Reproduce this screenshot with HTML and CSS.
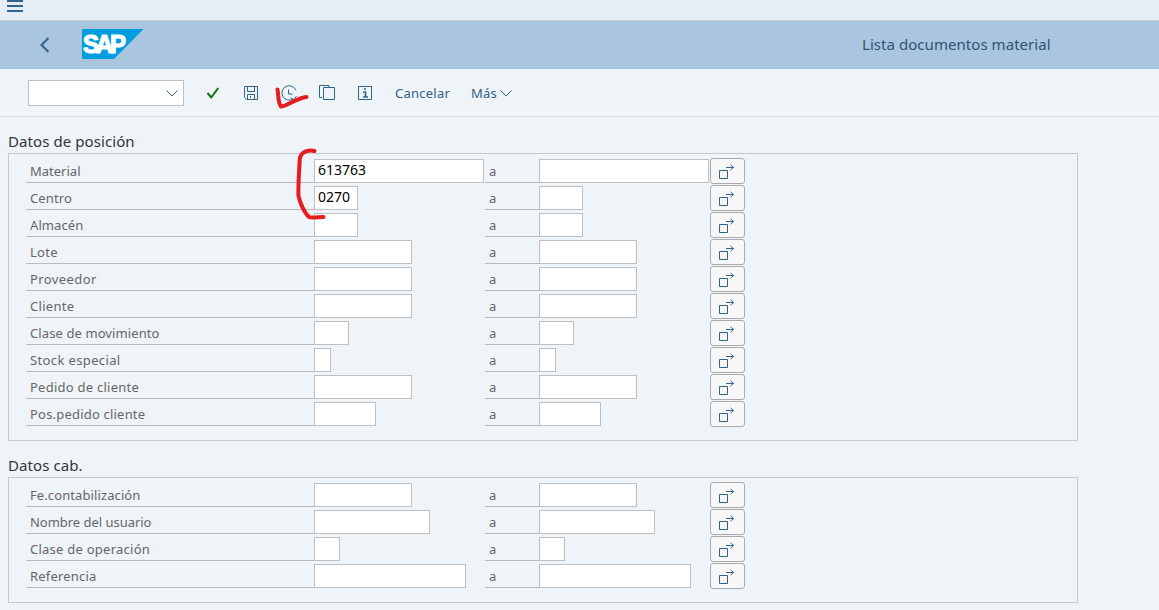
FILE: index.html
```html
<!DOCTYPE html>
<html lang="es">
<head>
<meta charset="utf-8">
<title>Lista documentos material</title>
<link rel="stylesheet" href="styles.css">
</head>
<body>
<svg class="defs" width="0" height="0" aria-hidden="true">
  <symbol id="multi" viewBox="0 0 16 16"><path d="M.5 6.500h8v8h-8zM7 3.500h7.500M11.500 .8l3 2.700-3 2.700"/></symbol>
</svg>
<div class="menubar">
  <svg class="burger" width="16" height="13" viewBox="0 0 16 13"><path d="M0 1h16M0 6h16M0 11h16"/></svg>
</div>
<header class="header">
  <svg class="back" width="10" height="16" viewBox="0 0 10 16"><path d="M8.500 1L1.500 8l7 7"/></svg>
  <svg class="logo" width="62" height="30" viewBox="0 0 62 30"><path class="logo-bg" d="M0 0h61.500L32 30H0z"/><text transform="translate(.9 23.600) scale(.960 1)">SAP</text></svg>
  <h1 class="title">Lista documentos material</h1>
</header>
<nav class="toolbar">
  <div class="combo"><svg width="12" height="7" viewBox="0 0 12 7"><path d="M.5.5L6 6 11.500.5"/></svg></div>
  <svg class="tool check" width="14" height="14" viewBox="0 0 14 14"><path d="M1.500 7l3.700 4.500L12.300 2"/></svg>
  <svg class="tool save" width="16" height="16" viewBox="0 0 16 16"><path d="M1.500 1.500h13v13h-11l-2-2zM4.500 1.500v5h7v-5M4.500 14.500v-5h7v5M7.500 11v2"/></svg>
  <svg class="tool" width="16" height="16" viewBox="0 0 16 16"><path d="M14.800 5.200A7.200 7.200 0 1 0 12 14M7.500 4.500v4.500h4M9.500 12.500l3 2.500 3-4"/></svg>
  <svg class="tool" width="16" height="16" viewBox="0 0 16 16"><path d="M3 12.500H.5V.5h9.500v2M4.500 14.500v-12h11v12z"/></svg>
  <svg class="tool" width="16" height="16" viewBox="0 0 16 16"><path d="M1.500 1.500h13v13h-13z"/><path class="info" d="M7 4h2M6 7h2.500v5M6 12h5"/></svg>
  <span class="action cancel">Cancelar</span>
  <span class="action more">Más</span>
  <svg class="chev" width="12" height="7" viewBox="0 0 12 7"><path d="M.5.5L6 6 11.500.5"/></svg>
</nav>
<main class="content" id="content"></main>
<svg class="ink" width="1159" height="610" viewBox="0 0 1159 610"><path d="M277.500 89.500C278.500 95 278 103 281 106.500C285 107 297 98 306.500 97"/><path d="M314.500 151C310 149.500 301 151 299.800 159C299 172 298 188 298.500 196C300 203 304.500 213 309 217C312 218.200 318 217 323.500 217"/></svg>
<script src="app.js"></script>
</body>
</html>
```
FILE: styles.css
```css
* { box-sizing: border-box; }
body {
  margin: 0;
  height: 610px;
  overflow: hidden;
  position: relative;
  background: #eff4f8;
  font-family: "Noto Sans", "Open Sans", sans-serif;
  color: #666;
}
svg { display: block; fill: none; stroke: #346187; flex: none; }
.defs { position: absolute; }
.menubar { height: 21px; background: #e5edf7; border-bottom: 1px solid #c9cbcb; padding-left: 7px; }
.burger { stroke-width: 2; }
.header { height: 48px; background: #a9c6de; display: flex; align-items: center; padding-left: 40px; }
.back { stroke-width: 2; }
.logo { margin: -2px 0 0 32px; stroke: none; overflow: visible; }
.logo-bg { fill: #009de0; }
.logo text { fill: #fff; font: bold 25px "Liberation Sans", sans-serif; letter-spacing: -3.2px; stroke: #fff; stroke-width: 1.2px; }
.title { margin: -2px 0 0 718px; font-size: 15px; font-weight: 400; line-height: 20px; color: #2f5475; letter-spacing: .05px; white-space: nowrap; }
.toolbar { height: 48px; border-bottom: 1px solid #cfe0ee; display: flex; align-items: center; padding-left: 28px; }
.combo { width: 156px; height: 26px; border: 1px solid #bfbfbf; background: #fff; display: flex; align-items: center; justify-content: flex-end; padding: 2px 5px 0 0; margin-right: 22px; }
.tool { margin-right: 22px; }
.check { stroke: #107010; stroke-width: 2; margin-right: 23px; }
.info { stroke-width: 1.7; }
.action { font-size: 13px; line-height: 18px; color: #346187; letter-spacing: .25px; white-space: nowrap; }
.cancel { width: 76px; }
.more { width: 29px; }
.chev { margin-top: 1px; }
.content { padding: 15px 0 0 8px; }
.heading { margin: 0; height: 21px; font-size: 15px; font-weight: 400; line-height: 18px; color: #32363a; letter-spacing: .08px; }
.group { width: 1070px; border: 1px solid #c5c9cb; padding: 4px 0 12px 17px; margin-bottom: 15px; }
.row { height: 27px; display: grid; grid-template-columns: 288px 171px 54px 171px 35px; align-items: start; }
.label { height: 25px; border-bottom: 1px solid #b8babc; padding: 4px 0 0 4px; font-size: 13px; line-height: 18px; white-space: nowrap; }
.field { height: 24px; margin-top: 1px; border: 1px solid #bfbfbf; background: #fff; padding-left: 3px; font-size: 14px; line-height: 20px; color: #000; }
.multi { width: 35px; height: 26px; border: 1px solid #aaa; border-radius: 3px; background: #f7f7f7; padding: 5px 0 0 8px; }
.ink { position: absolute; left: 0; top: 0; stroke: #e61d20; stroke-width: 4; stroke-linecap: round; stroke-linejoin: round; pointer-events: none; }
```
FILE: app.js
```js
// Each row: label, label letter spacing, field width in pixels, entered value
const groups = [
  ["Datos de posición", [
    ["Material", 0, 170, "613763"], ["Centro", .1, 44, "0270"], ["Almacén", .1, 44],
    ["Lote", .3, 98], ["Proveedor", .4, 98], ["Cliente", .3, 98],
    ["Clase de movimiento", .1, 35], ["Stock especial", .37, 17],
    ["Pedido de cliente", .25, 98], ["Pos.pedido cliente", .2, 62]]],
  ["Datos cab.", [
    ["Fe.contabilización", .1, 98], ["Nombre del usuario", -.03, 116],
    ["Clase de operación", .25, 26], ["Referencia", .2, 152]]]
];
document.getElementById("content").innerHTML = groups.map(([title, rows]) =>
  `<h2 class="heading">${title}</h2><section class="group">` +
  rows.map(([label, spacing, width, value = ""]) =>
    `<div class="row"><span class="label" style="letter-spacing:${spacing}px">${label}</span>
     <div class="field" style="width:${width}px">${value}</div>
     <span class="label">a</span>
     <div class="field" style="width:${width}px"></div>
     <div class="multi"><svg width="16" height="16"><use href="#multi"/></svg></div></div>`
  ).join("") + "</section>").join("");
```
